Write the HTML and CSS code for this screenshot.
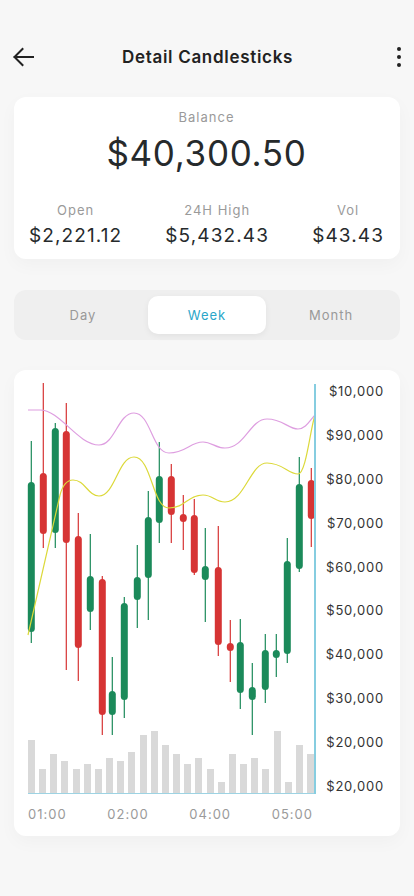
FILE: index.html
```html
<!DOCTYPE html>
<html>
<head>
<meta charset="utf-8">
<link rel="stylesheet" href="styles.css">
</head>
<body>
<div class="page">
  <header class="appbar">
    <svg class="back" width="22" height="22" viewBox="0 0 22 22"><path d="M21 11H2.5M10.5 3 2.5 11 10.5 19" fill="none" stroke="#222" stroke-width="2" stroke-linecap="square"/></svg>
    <h1 class="title">Detail Candlesticks</h1>
    <svg class="more" width="8" height="22" viewBox="0 0 8 22"><circle cx="4" cy="3" r="2"/><circle cx="4" cy="11" r="2"/><circle cx="4" cy="19" r="2"/></svg>
  </header>

  <section class="card balance">
    <div class="bal-label">Balance</div>
    <div class="bal-value">$40,300.50</div>
    <div class="stats">
      <div class="stat"><div class="stat-label">Open</div><div class="stat-value">$2,221.12</div></div>
      <div class="stat"><div class="stat-label">24H High</div><div class="stat-value">$5,432.43</div></div>
      <div class="stat"><div class="stat-label">Vol</div><div class="stat-value">$43.43</div></div>
    </div>
  </section>

  <nav class="tabs">
    <div class="tab">Day</div>
    <div class="tab active">Week</div>
    <div class="tab">Month</div>
  </nav>

  <section class="card chart">
    <svg class="plot" width="302" height="426" viewBox="14 370 302 426">
      <g fill="#d9d9d9">
        <rect x="28" y="740" width="7" height="53"/>
        <rect x="39" y="769" width="7" height="24"/>
        <rect x="50" y="754" width="7" height="39"/>
        <rect x="61" y="761" width="7" height="32"/>
        <rect x="73" y="769" width="7" height="24"/>
        <rect x="84" y="764" width="7" height="29"/>
        <rect x="95" y="769" width="7" height="24"/>
        <rect x="106" y="758" width="7" height="35"/>
        <rect x="117" y="761" width="7" height="32"/>
        <rect x="128" y="752" width="7" height="41"/>
        <rect x="140" y="735" width="7" height="58"/>
        <rect x="151" y="731" width="7" height="62"/>
        <rect x="162" y="745" width="7" height="48"/>
        <rect x="173" y="754" width="7" height="39"/>
        <rect x="184" y="764" width="7" height="29"/>
        <rect x="195" y="758" width="7" height="35"/>
        <rect x="207" y="769" width="7" height="24"/>
        <rect x="218" y="782" width="7" height="11"/>
        <rect x="229" y="754" width="7" height="39"/>
        <rect x="240" y="764" width="7" height="29"/>
        <rect x="251" y="758" width="7" height="35"/>
        <rect x="262" y="769" width="7" height="24"/>
        <rect x="274" y="731" width="7" height="62"/>
        <rect x="285" y="782" width="7" height="11"/>
        <rect x="296" y="745" width="7" height="48"/>
        <rect x="307" y="754" width="7" height="39"/>
      </g>
      <line x1="28" y1="793.5" x2="315" y2="793.5" stroke="#9dd3e3" stroke-width="1"/>

      <g class="up" fill="#1b8a5a" stroke="#1b8a5a" stroke-width="1.2">
        <line x1="31.3" y1="441" x2="31.3" y2="643"/><rect x="27.8" y="482" width="7" height="150" rx="3.5" stroke="none"/>
        <line x1="55.3" y1="423" x2="55.3" y2="548"/><rect x="51.8" y="428" width="7" height="105" rx="3.5" stroke="none"/>
        <line x1="90.3" y1="534" x2="90.3" y2="630"/><rect x="86.8" y="576" width="7" height="36" rx="3.5" stroke="none"/>
        <line x1="112.3" y1="657" x2="112.3" y2="735"/><rect x="108.8" y="691" width="7" height="24" rx="3.5" stroke="none"/>
        <line x1="124.3" y1="597" x2="124.3" y2="718"/><rect x="120.8" y="603" width="7" height="97" rx="3.5" stroke="none"/>
        <line x1="137.3" y1="545" x2="137.3" y2="628"/><rect x="133.8" y="577" width="7" height="23" rx="3.5" stroke="none"/>
        <line x1="148.3" y1="491" x2="148.3" y2="620"/><rect x="144.8" y="517" width="7" height="61" rx="3.5" stroke="none"/>
        <line x1="159.3" y1="442" x2="159.3" y2="543"/><rect x="155.8" y="476" width="7" height="47" rx="3.5" stroke="none"/>
        <line x1="205.3" y1="528" x2="205.3" y2="622"/><rect x="201.8" y="566" width="7" height="14" rx="3.5" stroke="none"/>
        <line x1="240.3" y1="619" x2="240.3" y2="709"/><rect x="236.8" y="642" width="7" height="51" rx="3.5" stroke="none"/>
        <line x1="252.3" y1="663" x2="252.3" y2="735"/><rect x="248.8" y="687" width="7" height="13" rx="3.5" stroke="none"/>
        <line x1="265.3" y1="634" x2="265.3" y2="703"/><rect x="261.8" y="650" width="7" height="40" rx="3.5" stroke="none"/>
        <line x1="276.3" y1="634" x2="276.3" y2="677"/><rect x="272.8" y="650" width="7" height="8" rx="3.5" stroke="none"/>
        <line x1="287.3" y1="538" x2="287.3" y2="663"/><rect x="283.8" y="561" width="7" height="93" rx="3.5" stroke="none"/>
        <line x1="299.3" y1="457" x2="299.3" y2="572"/><rect x="295.8" y="484" width="7" height="85" rx="3.5" stroke="none"/>
      </g>
      <g class="down" fill="#d63434" stroke="#d63434" stroke-width="1.2">
        <line x1="43.3" y1="383" x2="43.3" y2="548"/><rect x="39.8" y="473" width="7" height="61" rx="3.5" stroke="none"/>
        <line x1="66.3" y1="403" x2="66.3" y2="670"/><rect x="62.8" y="431" width="7" height="112" rx="3.5" stroke="none"/>
        <line x1="78.3" y1="513" x2="78.3" y2="681"/><rect x="74.8" y="536" width="7" height="112" rx="3.5" stroke="none"/>
        <line x1="102.3" y1="576" x2="102.3" y2="735"/><rect x="98.8" y="579" width="7" height="136" rx="3.5" stroke="none"/>
        <line x1="171.3" y1="464" x2="171.3" y2="543"/><rect x="167.8" y="476" width="7" height="39" rx="3.5" stroke="none"/>
        <line x1="183.3" y1="495" x2="183.3" y2="550"/><rect x="179.8" y="514" width="7" height="8" rx="3.5" stroke="none"/>
        <line x1="194.3" y1="499" x2="194.3" y2="575"/><rect x="190.8" y="515" width="7" height="58" rx="3.5" stroke="none"/>
        <line x1="218.3" y1="526" x2="218.3" y2="656"/><rect x="214.8" y="567" width="7" height="78" rx="3.5" stroke="none"/>
        <line x1="230.3" y1="620" x2="230.3" y2="682"/><rect x="226.8" y="643" width="7" height="8" rx="3.5" stroke="none"/>
        <line x1="311.3" y1="468" x2="311.3" y2="547"/><rect x="307.8" y="480" width="7" height="39" rx="3.5" stroke="none"/>
      </g>

      <path d="M28 410 L40 410 C60 410 78 445 99 445 C115 445 118 413 134 413 C151 413 152 453 169 453 C186 453 190 442 203 442 C212 442 215 448 225 448 C245 448 250 419 267 419 C283 419 288 429 298 429 C306 429 310 420 315 415" fill="none" stroke="#de9ee0" stroke-width="1.2"/>
      <path d="M28 635 L60 495 C63 484 67 480 73 480 C85 480 88 496 99 496 C115 496 118 457 134 457 C152 457 152 508 169 508 C185 508 188 495 203 495 C213 495 215 502 225 502 C245 502 250 463 267 463 C283 463 288 474 298 474 C306 474 310 430 315 415" fill="none" stroke="#dcd93a" stroke-width="1.2"/>

      <line x1="315" y1="384" x2="315" y2="794" stroke="#86cde0" stroke-width="2"/>
    </svg>
    <div class="yaxis">
      <span>$10,000</span><span>$90,000</span><span>$80,000</span><span>$70,000</span><span>$60,000</span>
      <span>$50,000</span><span>$40,000</span><span>$30,000</span><span>$20,000</span><span>$20,000</span>
    </div>
    <div class="xaxis">
      <span>01:00</span><span>02:00</span><span>04:00</span><span>05:00</span>
    </div>
  </section>
</div>
</body>
</html>
```

FILE: styles.css
```css
* { box-sizing: border-box; }
html, body { margin: 0; padding: 0; }
body {
  background: #f7f7f7;
  font-family: Inter, "Noto Sans", sans-serif;
  color: #222;
}
.page {
  width: 414px;
  height: 896px;
  overflow: hidden;
  padding-top: 29px;
}
.appbar {
  height: 56px;
  display: grid;
  grid-template-columns: 1fr auto 1fr;
  align-items: center;
  padding: 0 11px 0 12px;
}
.back { display: block; justify-self: start; }
.more { display: block; fill: #222; justify-self: end; }
.title {
  margin: 0;
  font-size: 17px;
  font-weight: 600;
  letter-spacing: 0.7px;
  color: #222;
}
.card {
  background: #fff;
  border-radius: 12px;
  margin: 0 14px;
  box-shadow: 0 6px 18px rgba(0,0,0,0.03);
}
.balance {
  margin-top: 12px;
  padding: 12px 16px 11px 15px;
  text-align: center;
}
.bal-label {
  font-size: 13px;
  line-height: 16px;
  letter-spacing: 1px;
  color: #9a9a9a;
}
.bal-value {
  margin-top: 8px;
  font-size: 35px;
  line-height: 40px;
  letter-spacing: 0.7px;
  color: #262a2c;
}
.stats {
  margin-top: 29px;
  display: flex;
  justify-content: space-between;
}
.stat-label {
  font-size: 13px;
  line-height: 16px;
  letter-spacing: 1px;
  color: #9a9a9a;
}
.stat-value {
  margin-top: 6px;
  font-size: 19px;
  line-height: 24px;
  letter-spacing: 1.1px;
  color: #262a2c;
}
.tabs {
  margin: 31px 14px 0;
  height: 50px;
  background: #efefef;
  border-radius: 12px;
  padding: 6px 7px;
  display: grid;
  grid-template-columns: 1fr 1fr 1fr;
}
.tab {
  display: flex;
  align-items: center;
  justify-content: center;
  font-size: 13px;
  letter-spacing: 1px;
  color: #999;
  border-radius: 10px;
}
.tab.active {
  background: #fff;
  color: #2aa6c9;
  margin: 0 3px;
  box-shadow: 0 2px 6px rgba(0,0,0,0.06);
}
.chart {
  margin-top: 30px;
  height: 466px;
  display: grid;
  grid-template-columns: 302px 1fr;
  grid-template-rows: 426px 40px;
}
.plot { display: block; }
.yaxis {
  padding: 13px 16px 0 0;
  height: 424px;
  display: flex;
  flex-direction: column;
  justify-content: space-between;
  align-items: flex-end;
}
.yaxis span {
  font-size: 13px;
  line-height: 16px;
  letter-spacing: 0.8px;
  color: #333;
}
.xaxis {
  grid-column: 1 / 3;
  padding: 10px 0 0 14px;
  width: 299px;
  display: flex;
  justify-content: space-between;
}
.xaxis span {
  font-size: 13px;
  line-height: 16px;
  letter-spacing: 1px;
  color: #9a9a9a;
}
```
